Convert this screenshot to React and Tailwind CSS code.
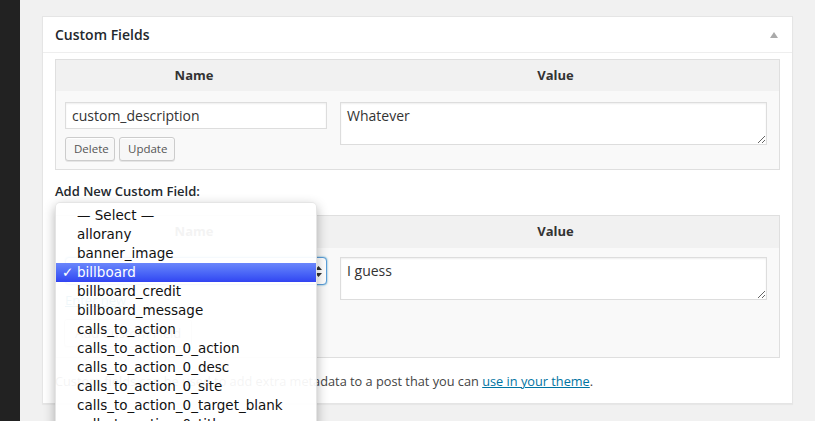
import React from 'react';

const metaKeys = [
  '— Select —',
  'allorany',
  'banner_image',
  'billboard',
  'billboard_credit',
  'billboard_message',
  'calls_to_action',
  'calls_to_action_0_action',
  'calls_to_action_0_desc',
  'calls_to_action_0_site',
  'calls_to_action_0_target_blank',
  'calls_to_action_0_title',
];

const ListHead = ({ height }) => (
  <div className={`grid grid-cols-[276px_1fr] bg-[#f1f1f1] text-[13px] font-bold text-[#333] ${height}`}>
    <div className="flex items-center justify-center">Name</div>
    <div className="flex items-center justify-center">Value</div>
  </div>
);

const WpButton = ({ children, className = '' }) => (
  <button
    className={`h-[24px] px-[8px] border border-[#ccc] bg-[#f7f7f7] rounded-[3px] font-['Open_Sans',sans-serif] text-[11.5px] leading-[22px] text-[#555] shadow-[inset_0_1px_0_#fff,0_1px_0_rgba(0,0,0,0.08)] ${className}`}
  >
    {children}
  </button>
);

// macOS-style popup menu of the meta key <select>
const KeyMenu = () => (
  <div className="absolute left-[55px] top-[202px] w-[262px] h-[240px] rounded-[5px] border border-black/10 bg-white/[0.94] pt-[3px] shadow-[0_4px_12px_rgba(0,0,0,0.3)] font-['DejaVu_Sans',sans-serif] text-[13.5px]">
    {metaKeys.map((k) =>
      k === 'billboard' ? (
        <div
          key={k}
          className="relative h-[19px] leading-[19px] pl-[21px] text-white bg-gradient-to-b from-[#6b86fb] to-[#3243f2]"
        >
          <span className="absolute left-[6px] top-0 font-bold">✓</span>
          {k}
        </div>
      ) : (
        <div key={k} className="h-[19px] leading-[19px] pl-[21px] text-[#111]">
          {k}
        </div>
      )
    )}
  </div>
);

export default function App() {
  return (
    <div className="relative flex w-[815px] h-[421px] overflow-hidden bg-[#f1f1f1] font-['Open_Sans',sans-serif]">
      <div className="w-[20px] shrink-0 bg-[#222]" />

      <div className="pl-[22px] pt-[16px]">
        <div className="w-[751px] border border-[#e5e5e5] bg-white shadow-[0_1px_1px_rgba(0,0,0,0.04)]">
          {/* header */}
          <div className="flex h-[36px] items-center justify-between border-b border-[#eee] pl-[12px] pr-[14px]">
            <h3 className="text-[14px] font-semibold text-[#23282d]">Custom Fields</h3>
            <svg width="8" height="6" viewBox="0 0 8 6">
              <path d="M0 6 L4 0 L8 6 Z" fill="#aaa" />
            </svg>
          </div>

          <div className="px-[12px] pt-[6px] pb-[13px] text-[13px] text-[#444]">
            {/* existing fields */}
            <div className="border border-[#dfdfdf]">
              <ListHead height="h-[31px]" />
              <div className="grid grid-cols-[276px_1fr] bg-[#f9f9f9]">
                <div className="pl-[9px] pt-[11px] pb-[8px]">
                  <input
                    defaultValue="custom_description"
                    className="w-[262px] h-[27px] border border-[#ddd] bg-white px-[6px] text-[14px] text-[#333] shadow-[inset_0_1px_2px_rgba(0,0,0,0.07)] outline-none"
                  />
                  <div className="mt-[8px] flex gap-[4px]">
                    <WpButton className="w-[50px]">Delete</WpButton>
                    <WpButton className="w-[56px]">Update</WpButton>
                  </div>
                </div>
                <div className="pl-[8px] pr-[12px] pt-[11px]">
                  <textarea
                    defaultValue="Whatever"
                    className="block w-full h-[43px] border border-[#ddd] bg-white px-[6px] py-[2px] text-[14px] text-[#333] shadow-[inset_0_1px_2px_rgba(0,0,0,0.07)] outline-none"
                  />
                </div>
              </div>
            </div>

            <p className="mt-[12px] text-[13px] leading-[18px] font-semibold text-[#23282d]">Add New Custom Field:</p>

            {/* new field */}
            <div className="mt-[15px] border border-[#dfdfdf]">
              <ListHead height="h-[32px]" />
              <div className="bg-[#f9f9f9] h-[109px]">
                <div className="grid grid-cols-[276px_1fr]">
                  <div className="pl-[9px] pt-[9px]">
                    <div className="relative w-[262px] h-[28px] rounded-[4px] border border-[#5b9dd9] bg-white shadow-[0_0_2px_rgba(30,140,190,0.8)]">
                      <svg className="absolute right-[4px] top-[8px]" width="7" height="11" viewBox="0 0 7 11">
                        <path d="M0 4 L3.5 0 L7 4 Z M0 7 L3.5 11 L7 7 Z" fill="#333" />
                      </svg>
                    </div>
                    <a className="mt-[6px] block text-[13px] text-[#0074a2] underline">Enter new</a>
                  </div>
                  <div className="pl-[8px] pr-[12px] pt-[9px]">
                    <textarea
                      defaultValue="I guess"
                      className="block w-full h-[43px] border border-[#ddd] bg-white px-[6px] py-[2px] text-[14px] text-[#333] shadow-[inset_0_1px_2px_rgba(0,0,0,0.07)] outline-none"
                    />
                  </div>
                </div>
                <div className="pl-[8px] pt-[8px]">
                  <WpButton className="h-[28px] px-[10px] text-[13px]">Add Custom Field</WpButton>
                </div>
              </div>
            </div>

            <p className="mt-[14px] text-[12.75px] leading-[18px]">
              Custom fields can be used to add extra metadata to a post that you can{' '}
              <a className="text-[#0074a2] underline">use in your theme</a>.
            </p>
          </div>
        </div>
      </div>

      <KeyMenu />
    </div>
  );
}
